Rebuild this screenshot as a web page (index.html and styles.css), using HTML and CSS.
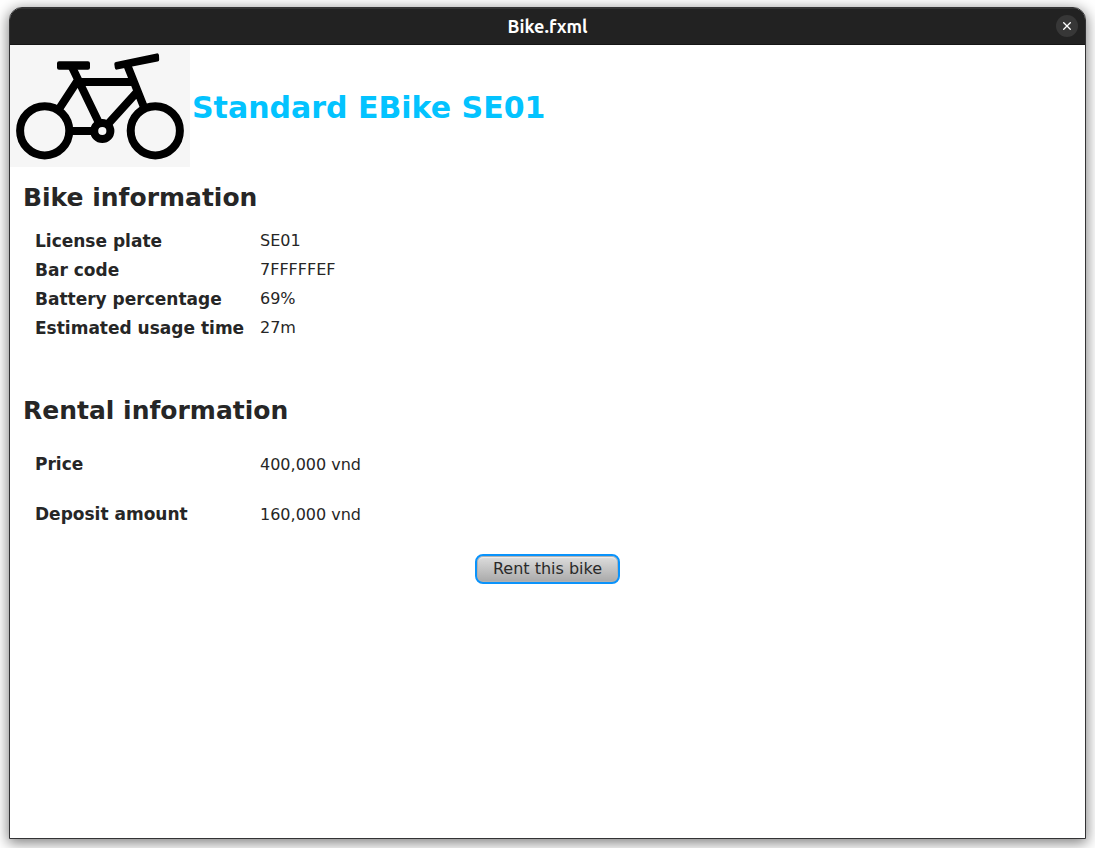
FILE: index.html
```
<!DOCTYPE html>
<html lang="en">
<head>
<meta charset="utf-8">
<title>Bike.fxml</title>
<link rel="stylesheet" href="styles.css">
</head>
<body>
<div class="window">
  <header class="titlebar">
    <span class="titlebar-text">Bike.fxml</span>
    <button class="close" type="button" aria-label="Close">
      <svg viewBox="0 0 8 8" width="8" height="8" aria-hidden="true"><path d="M0.3 0.3 7.7 7.7M7.7 0.3 0.3 7.7"/></svg>
    </button>
  </header>
  <main class="content">
    <div class="hero">
      <svg class="bike" viewBox="0 0 180 122" width="180" height="122" role="img" aria-label="Bike">
        <circle cx="34.7" cy="85.8" r="24.6"/>
        <circle cx="145.3" cy="85.8" r="24.6"/>
        <circle cx="92.3" cy="86" r="8.1"/>
        <path d="M61.5 21 89.5 79M69 33.5 49 64M68 37H125M116.8 19 134.3 63M127.5 46.5 98 79M61 86H83"/>
        <path class="round" d="M49 18.3H78V22.7H49ZM106.3 18.9 147 10.4 147.2 14.6 106.8 22.6Z"/>
      </svg>
      <h1 class="name">Standard EBike SE01</h1>
    </div>
    <section class="section">
      <h2 class="heading">Bike information</h2>
      <dl class="facts">
        <dt>License plate</dt><dd>SE01</dd>
        <dt>Bar code</dt><dd>7FFFFFEF</dd>
        <dt>Battery percentage</dt><dd>69%</dd>
        <dt>Estimated usage time</dt><dd>27m</dd>
      </dl>
    </section>
    <section class="section rental">
      <h2 class="heading">Rental information</h2>
      <dl class="facts facts-loose">
        <dt>Price</dt><dd>400,000 vnd</dd>
        <dt>Deposit amount</dt><dd>160,000 vnd</dd>
      </dl>
    </section>
    <button class="rent" type="button">Rent this bike</button>
  </main>
</div>
</body>
</html>
```
FILE: styles.css
```
* { box-sizing: border-box; }
body {
  margin: 0;
  min-height: 100vh;
  padding: 7px 9px 9px;
  display: flex;
  background: #fff;
  color: #262626;
  font-family: "DejaVu Sans", sans-serif;
  font-size: 16px;
}
.window {
  flex: 1;
  display: flex;
  flex-direction: column;
  overflow: hidden;
  border: 1px solid #333335;
  border-radius: 13px 13px 0 0;
  background: #fff;
  box-shadow: 0 3px 14px 1px rgba(0, 0, 0, 0.5);
}
.titlebar {
  display: grid;
  grid-template-columns: 1fr auto 1fr;
  align-items: center;
  height: 37px;
  padding: 0 7px 1px;
  border-top: 1px solid #333;
  border-bottom: 1px solid #161616;
  background: #222;
  color: #fff;
}
.titlebar-text {
  grid-column: 2;
  font: bold 18px/24px "Ubuntu", "Noto Sans", sans-serif;
}
.close {
  justify-self: end;
  display: grid;
  place-items: center;
  width: 22px;
  height: 22px;
  padding: 0;
  border: 0;
  border-radius: 50%;
  background: #373737;
}
.close svg { fill: none; stroke: #fff; stroke-width: 1.3; }
.content { display: flex; flex-direction: column; }
.hero { display: flex; align-items: center; gap: 2px; }
.bike {
  background: #f6f6f6;
  fill: none;
  stroke: #000;
  stroke-width: 8;
}
.bike .round { fill: #000; stroke-width: 4; stroke-linejoin: round; }
.name { margin: 0; padding-top: 4px; color: #03c3ff; font-size: 30px; line-height: 36px; }
.section { padding: 16px 13px 0; }
.heading { margin: 0; font-size: 25px; line-height: 30px; }
.facts {
  display: grid;
  grid-template-columns: 215px 1fr;
  grid-auto-rows: 29px;
  column-gap: 10px;
  align-items: center;
  margin: 0;
  padding: 13px 12px 0;
}
.facts dt { font-size: 17px; font-weight: bold; }
.facts dd { margin: 0; }
.rental { padding-top: 54px; }
.facts-loose { grid-auto-rows: 50px; }
.rent {
  align-self: center;
  height: 30px;
  margin-top: 15px;
  padding: 0 16px 1px;
  border: 2px solid #0a93fb;
  border-radius: 8px;
  background: linear-gradient(#dedede, #a9a9a9);
  box-shadow: inset 0 0 0 1px #b2b2b2, inset 0 2px 1px #eee;
  color: #2a2a2a;
  font: 16px/24px "DejaVu Sans", sans-serif;
}
```
